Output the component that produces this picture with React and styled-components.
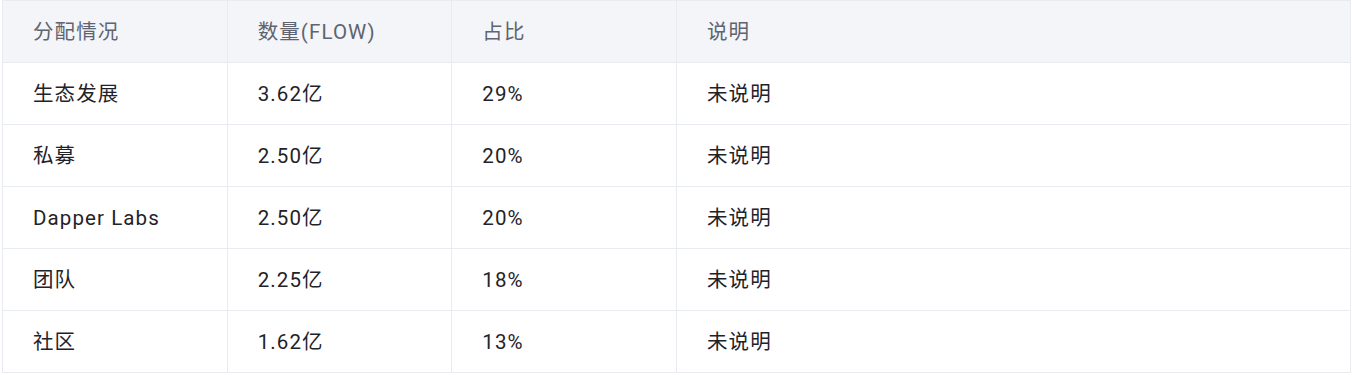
import React from "react";
import styled, { createGlobalStyle } from "styled-components";

const Global = createGlobalStyle`
  html, body { margin: 0; padding: 0; background: #fff; }
  body { font-family: Roboto, "Noto Sans CJK SC", sans-serif; }
`;

const Wrap = styled.div`
  padding: 0 1px 0 2px;
`;

const Table = styled.table`
  width: 100%;
  border-collapse: collapse;
  table-layout: fixed;
  font-size: 20.5px;
  line-height: 1;
  letter-spacing: 1.1px;
`;

const Col = styled.col`
  width: ${(p) => p.$w};
`;

const Th = styled.th`
  box-sizing: border-box;
  height: 62px;
  padding: 1px 0 0 30px;
  text-align: left;
  vertical-align: middle;
  font-weight: 400;
  color: #5f6470;
  background: #f3f5f9;
  border: 1px solid #e8ebf0;
`;

const Td = styled.td`
  box-sizing: border-box;
  height: 62px;
  padding: 2px 0 0 30px;
  text-align: left;
  vertical-align: middle;
  color: #1f2329;
  background: #fff;
  border: 1px solid #e8ebf0;
`;

const rows = [
  ["生态发展", "3.62亿", "29%", "未说明"],
  ["私募", "2.50亿", "20%", "未说明"],
  ["Dapper Labs", "2.50亿", "20%", "未说明"],
  ["团队", "2.25亿", "18%", "未说明"],
  ["社区", "1.62亿", "13%", "未说明"],
];

export default function App() {
  return (
    <Wrap>
      <Global />
      <Table>
        <colgroup>
          <Col $w="16.667%" />
          <Col $w="16.667%" />
          <Col $w="16.667%" />
          <Col $w="50%" />
        </colgroup>
        <thead>
          <tr>
            <Th>分配情况</Th>
            <Th>数量(FLOW)</Th>
            <Th>占比</Th>
            <Th>说明</Th>
          </tr>
        </thead>
        <tbody>
          {rows.map((r) => (
            <tr key={r[0]}>
              {r.map((c, i) => (
                <Td key={i}>{c}</Td>
              ))}
            </tr>
          ))}
        </tbody>
      </Table>
    </Wrap>
  );
}
